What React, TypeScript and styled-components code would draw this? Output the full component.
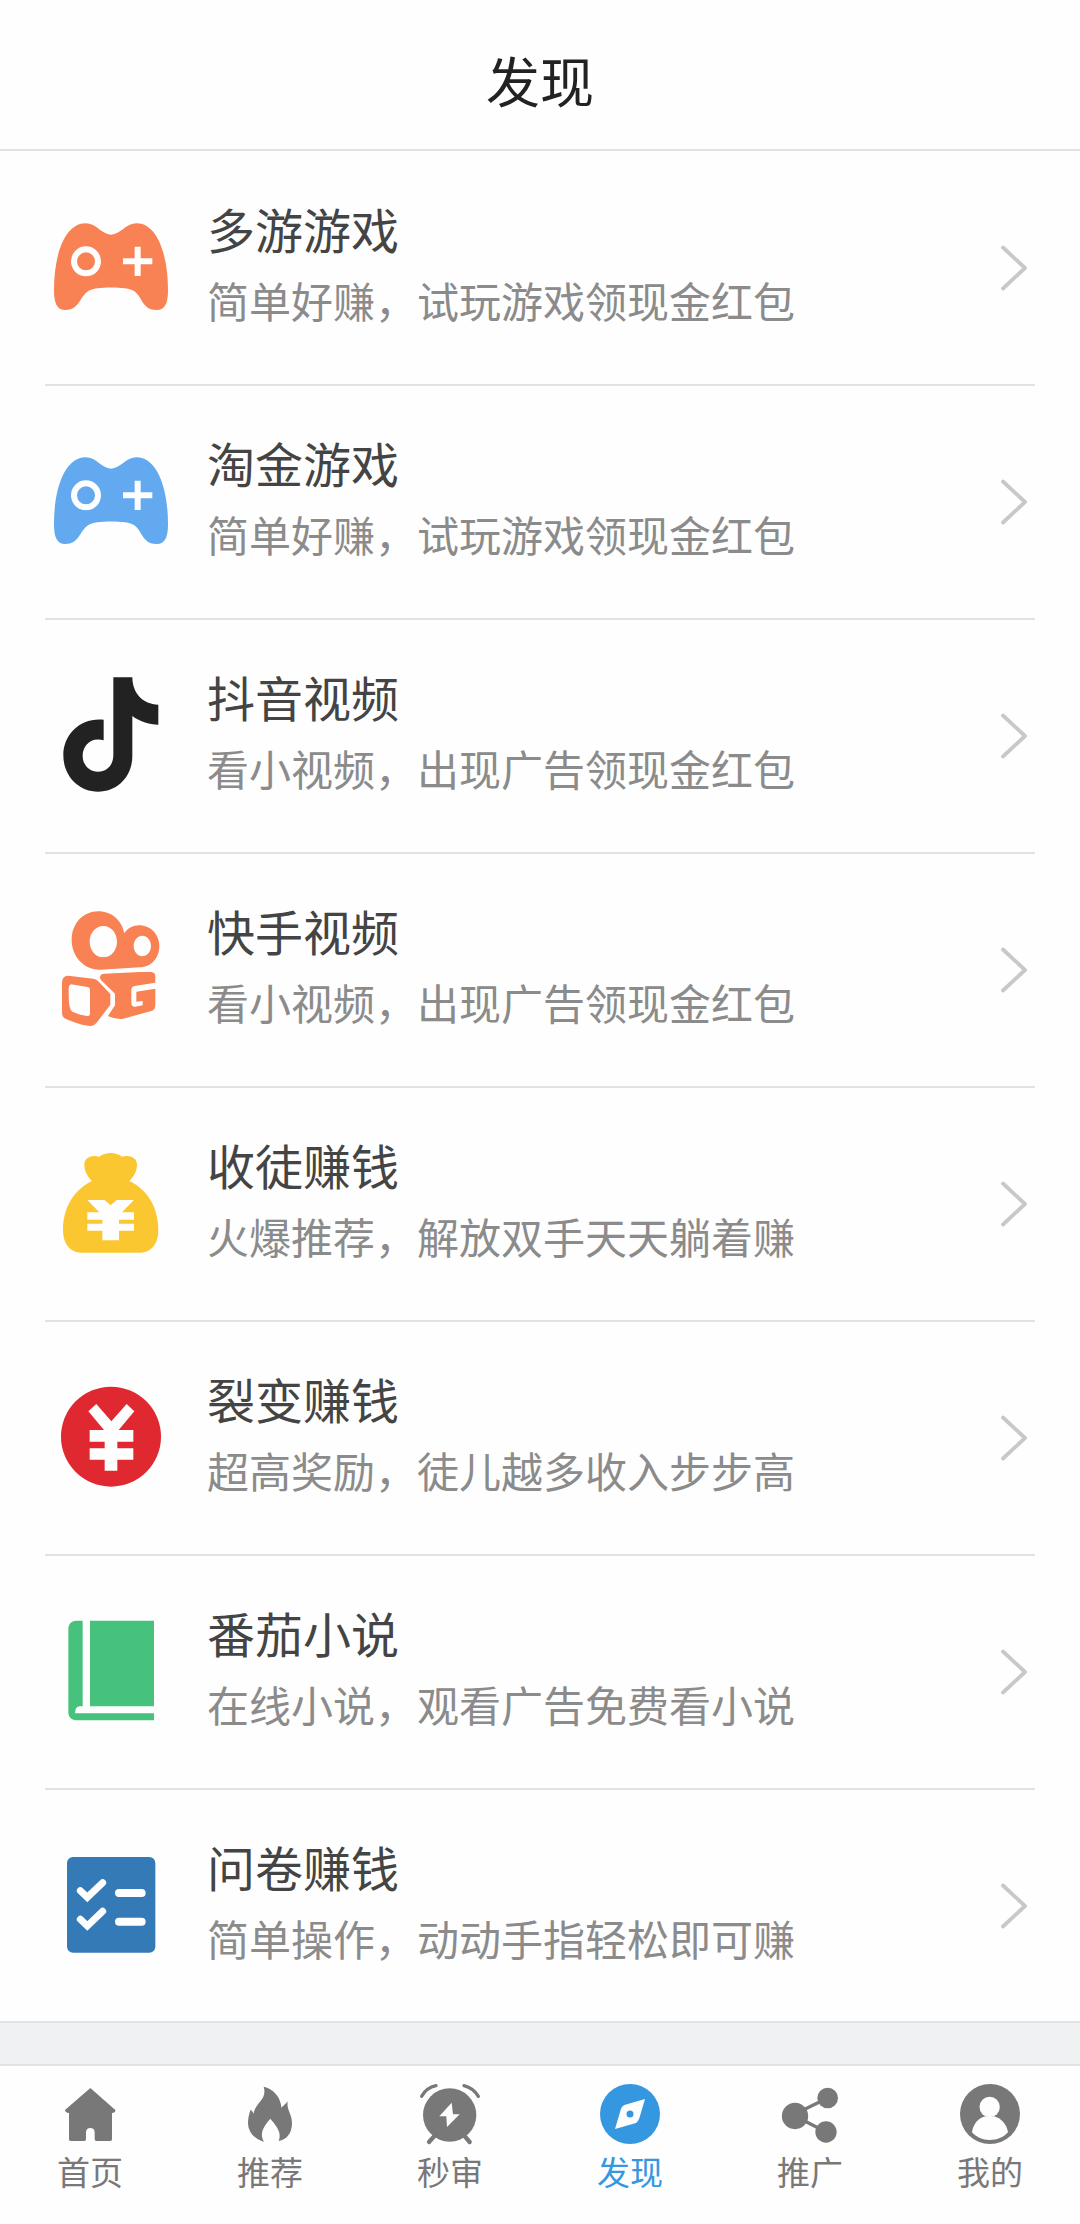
import React from "react";
import styled, { createGlobalStyle } from "styled-components";

const GlobalStyle = createGlobalStyle`
  * { box-sizing: border-box; }
  body {
    margin: 0;
    background: #fefefe;
    font-family: "Noto Sans CJK SC", sans-serif;
  }
`;

const Page = styled.div`
  width: 1080px;
  height: 2224px;
  display: flex;
  flex-direction: column;
  overflow: hidden;
  background: #fefefe;
`;

const Header = styled.header`
  height: 151px;
  flex: none;
  padding-top: 11px;
  display: flex;
  align-items: center;
  justify-content: center;
  border-bottom: 2px solid #e2e2e3;
`;

const Title = styled.h1`
  margin: 0;
  font-size: 54px;
  line-height: 80px;
  font-weight: 400;
  color: #222;
`;

const List = styled.ul`
  margin: 0;
  padding: 1px 45px 0;
  list-style: none;
  height: 1872px;
  flex: none;
  border-bottom: 2px solid #e2e3e4;
`;

const Row = styled.li`
  height: 234px;
  padding: 0 7px 0 6px;
  display: flex;
  align-items: center;
  border-bottom: 2px solid #e2e2e3;
  &:last-child { border-bottom-color: transparent; }
`;

const RowIcon = styled.svg`
  width: 120px;
  height: 120px;
  flex: none;
`;

const RowText = styled.div`
  flex: 1;
  padding: 0 0 8px 36px;
`;

const RowName = styled.div`
  font-size: 48px;
  line-height: 71px;
  color: #444;
`;

const RowNote = styled.div`
  font-size: 42px;
  line-height: 71px;
  color: #8b8b8b;
  white-space: nowrap;
`;

const Arrow = styled.svg`
  width: 32px;
  height: 50px;
  flex: none;
`;

const Gap = styled.div`
  flex: none;
  height: 41px;
  background: #eff1f3;
`;

const TabBar = styled.nav`
  flex: 1;
  display: grid;
  grid-template-columns: repeat(6, 1fr);
  border-top: 2px solid #e1e2e3;
`;

const Tab = styled.a<{ $active?: boolean }>`
  padding-top: 15px;
  display: flex;
  flex-direction: column;
  align-items: center;
  color: ${(p) => (p.$active ? "#3697e1" : "#787878")};
`;

const TabIcon = styled.svg`
  width: 66px;
  height: 66px;
  fill: currentColor;
`;

const TabLabel = styled.span`
  margin-top: 4px;
  font-size: 33px;
  line-height: 40px;
`;

const Gamepad = ({ color }: { color: string }) => (
  <RowIcon viewBox="33 24 360 360" fill="none">
    <path fill={color} d="M137 70C170 70 185 104 213 104C241 104 257 70 290 70C350 70 384 160 384 270C384 308 376 330 350 330C306 330 308 291 282 273C262 259 165 259 145 273C118 291 118 330 76 330C50 330 42 308 42 270C42 160 76 70 137 70Z" />
    <circle cx="138" cy="184" r="36" stroke="#fefefe" strokeWidth="18" />
    <path d="M249 184H337M293 140V228" stroke="#fefefe" strokeWidth="18" />
  </RowIcon>
);

const Note = () => (
  <RowIcon viewBox="33 48 360 360" fill="#222">
    <path d="M220 52H277C277 98 308 134 355 134V194C326 194 298 184 277 168V288C277 350 232 395 174 395C115 395 70 347 70 286C70 222 122 172 191 179V241C152 230 128 258 128 287C128 315 148 335 174 335C202 335 220 314 220 286Z" />
  </RowIcon>
);

const Camera = () => (
  <RowIcon viewBox="33 60 360 360" fill="#f98255" fillRule="evenodd">
    <path d="M175 64C215 64 246 92 253 130C262 115 278 106 298 106C332 106 358 134 358 168C358 204 334 231 300 232L180 239C130 240 95 197 95 150C95 100 130 64 175 64ZM190 108C167 108 149 129 149 155S167 202 190 202S231 181 231 155S213 108 190 108ZM307 137C293 137 281 151 281 168S293 199 307 199S333 185 333 168S321 137 307 137Z" />
    <path d="M85 257L160 266Q168 267 175 274L211 312V344L171 397Q163 408 150 408C122 405 100 397 78 387Q66 382 66 370V278Q67 256 85 257ZM93 283Q87 284 86 296C86 330 86 361 99 366C112 372 125 376 141 378Q150 379 150 371V300Q150 292 142 291Z" />
    <path d="M180 262Q180 252 194 251L300 246H332Q346 246 346 260V278L284 288Q274 290 274 300V338Q274 351 286 350L308 346V333L289 335V305L346 296V344Q346 360 334 363L250 386Q227 389 204 378L225 346V311L183 270Q180 267 180 262Z" />
  </RowIcon>
);

const MoneyBag = () => (
  <RowIcon viewBox="33 42 360 360">
    <path fill="#fbc730" d="M156 153C140 138 132 118 133 103C134 83 154 74 178 80C196 65 228 65 246 80C270 74 290 83 291 103C291 122 284 138 268 153C325 180 355 235 355 300C355 340 335 368 300 368H124C90 368 69 340 69 300C69 235 100 180 156 153Z" />
    <path fill="#fefefe" d="M142 210H194L212 226L230 210H282L246 247H282V269H237V281H282V302H237V331H187V302H142V281H187V269H142V247H178Z" />
  </RowIcon>
);

const Coin = () => (
  <RowIcon viewBox="33 54 360 360">
    <circle cx="213" cy="230" r="150" fill="#df2830" />
    <path fill="#fefefe" d="M169 132L214 184L260 132L283 154L236 210H280V245H232V265H280V299H232V332H194V299H149V265H194V245H149V210H192L145 154Z" />
  </RowIcon>
);

const Book = () => (
  <RowIcon viewBox="33 36 360 360" fill="#47c27d">
    <path d="M107 62H128V319H118Q105 321 105 340H342V361H107Q87 359 85 340V84Q87 64 107 62Z" />
    <path d="M150 62H342V319H150Z" />
  </RowIcon>
);

const Survey = () => (
  <RowIcon viewBox="33 48 360 360" fill="none" stroke="#fefefe" strokeLinecap="round">
    <rect x="81" y="81" width="265" height="287" rx="18" fill="#347ab7" stroke="none" />
    <path d="M121 182L142 202L188 158M121 268L142 288L188 244" strokeWidth="21" />
    <path d="M237 189H305M237 275H305" strokeWidth="24" />
  </RowIcon>
);

const rows = [
  { name: "多游游戏", note: "简单好赚，试玩游戏领现金红包", icon: <Gamepad color="#f98255" /> },
  { name: "淘金游戏", note: "简单好赚，试玩游戏领现金红包", icon: <Gamepad color="#62a9f0" /> },
  { name: "抖音视频", note: "看小视频，出现广告领现金红包", icon: <Note /> },
  { name: "快手视频", note: "看小视频，出现广告领现金红包", icon: <Camera /> },
  { name: "收徒赚钱", note: "火爆推荐，解放双手天天躺着赚", icon: <MoneyBag /> },
  { name: "裂变赚钱", note: "超高奖励，徒儿越多收入步步高", icon: <Coin /> },
  { name: "番茄小说", note: "在线小说，观看广告免费看小说", icon: <Book /> },
  { name: "问卷赚钱", note: "简单操作，动动手指轻松即可赚", icon: <Survey /> },
];

const tabs = [
  {
    label: "首页",
    icon: (
      <TabIcon viewBox="171 243 198 198">
        <path d="M271 264L346 330Q347 338 336 339V418Q336 423 331 423H289Q284 423 284 418V396Q283 384 271 384T258 396V418Q258 423 253 423H212Q207 423 207 418V339Q195 338 195 330Z" />
      </TabIcon>
    ),
  },
  {
    label: "推荐",
    icon: (
      <TabIcon viewBox="711 243 198 198">
        <path d="M791 260C820 266 843 292 844 323C851 317 859 310 863 304C859 330 876 340 876 370C876 400 860 419 836 423C846 398 830 378 811 356C791 379 777 400 792 425C762 416 744 395 744 368C744 352 748 340 752 329C756 332 759 336 761 341C765 308 803 300 791 260Z" />
      </TabIcon>
    ),
  },
  {
    label: "秒审",
    icon: (
      <TabIcon viewBox="171 243 198 198">
        <circle cx="269" cy="345" r="80" />
        <g fill="none" stroke="currentColor" strokeLinecap="round">
          <path d="M185 289Q199 263 228 257M312 257Q340 264 355 289" strokeWidth="10" />
          <path d="M225 406L207 426M312 406L329 426" strokeWidth="13" />
        </g>
        <path fill="#fefefe" d="M275 308L238 349H259L261 381L299 343H279Z" />
      </TabIcon>
    ),
  },
  {
    label: "发现",
    active: true,
    icon: (
      <TabIcon viewBox="711 243 198 198">
        <circle cx="810" cy="342" r="90" />
        <path fill="#fefefe" d="M855 297L838 355Q836 362 828 369L765 387L783 326Q785 320 793 315Z" />
        <circle cx="810" cy="342" r="10.5" />
      </TabIcon>
    ),
  },
  {
    label: "推广",
    icon: (
      <TabIcon viewBox="171 243 198 198">
        <circle cx="225" cy="348" r="39.5" />
        <circle cx="323" cy="294" r="31" />
        <circle cx="318" cy="396" r="32" />
        <path d="M323 294L225 342M225 348L318 396" stroke="currentColor" strokeWidth="10" />
      </TabIcon>
    ),
  },
  {
    label: "我的",
    icon: (
      <TabIcon viewBox="711 243 198 198">
        <circle cx="810" cy="342" r="90" />
        <circle cx="809" cy="321" r="30.5" fill="#fefefe" />
        <path fill="#fefefe" d="M756 397C760 368 778 354 796 349H823C842 355 860 371 864 397C850 413 830 420 809 420S769 412 756 397Z" />
      </TabIcon>
    ),
  },
];

export default function App() {
  return (
    <>
      <GlobalStyle />
      <Page>
        <Header>
          <Title>发现</Title>
        </Header>
        <List>
          {rows.map((row) => (
            <Row key={row.name}>
              {row.icon}
              <RowText>
                <RowName>{row.name}</RowName>
                <RowNote>{row.note}</RowNote>
              </RowText>
              <Arrow
                viewBox="0 0 32 50"
                fill="none"
                stroke="#c8c8cb"
                strokeWidth="3.8"
                strokeLinecap="round"
                strokeLinejoin="round"
              >
                <path d="M7 4.500L29 25L7 45.500" />
              </Arrow>
            </Row>
          ))}
        </List>
        <Gap />
        <TabBar>
          {tabs.map((tab) => (
            <Tab key={tab.label} $active={tab.active}>
              {tab.icon}
              <TabLabel>{tab.label}</TabLabel>
            </Tab>
          ))}
        </TabBar>
      </Page>
    </>
  );
}
